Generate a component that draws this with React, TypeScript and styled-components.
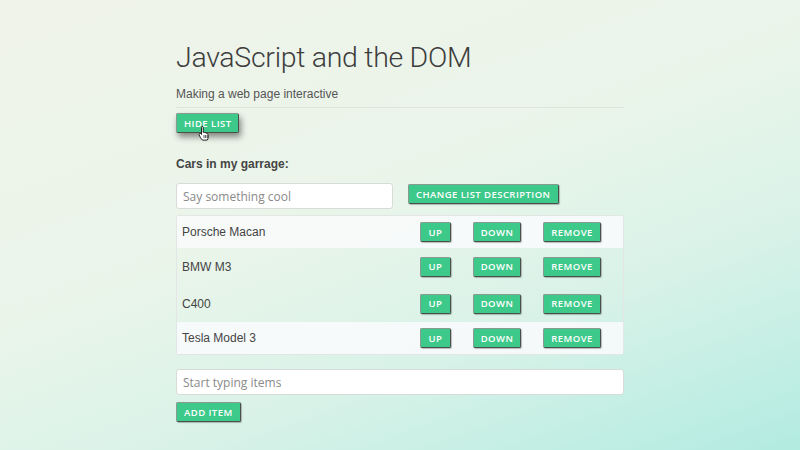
import React from "react";
import styled, { createGlobalStyle } from "styled-components";

const Global = createGlobalStyle`
  html, body { margin: 0; padding: 0; }
  body {
    width: 800px;
    height: 450px;
    overflow: hidden;
    background: linear-gradient(160deg, #f0f3e9 0%, #eaf5ea 45%, #d8f2e8 70%, #b2ebe1 100%);
    font-family: "Liberation Sans", Arial, sans-serif;
    color: #444;
  }
`;

const Page = styled.div`
  width: 448px;
  margin: 0 auto;
  padding-top: 40px;
  display: flex;
  flex-direction: column;
`;

const Title = styled.h1`
  margin: 0;
  font-family: Roboto, "Liberation Sans", sans-serif;
  font-weight: 300;
  font-size: 28.5px;
  line-height: 36px;
  color: #3d3d3d;
  letter-spacing: -0.3px;
`;

const Subtitle = styled.p`
  margin: 10px 0 0;
  font-size: 12px;
  line-height: 16px;
  color: #555;
  padding-bottom: 5px;
  border-bottom: 1px solid #e0e5dc;
`;

const Button = styled.button<{ $hover?: boolean }>`
  align-self: flex-start;
  height: 20px;
  padding: 0 7px;
  background: #3dc98a;
  color: #fff;
  border: 1px solid #8a9a92;
  border-right-color: #4a4f4c;
  border-bottom-color: #4a4f4c;
  border-radius: 2px;
  font-family: "Open Sans", "Liberation Sans", sans-serif;
  font-weight: 600;
  font-size: 9.5px;
  letter-spacing: 0.45px;
  text-transform: uppercase;
  cursor: pointer;
  box-shadow: ${(p) => (p.$hover ? "2px 4px 6px rgba(0,0,0,0.45)" : "1px 1px 1px rgba(0,0,0,0.25)")};
`;

const HideWrap = styled.div`
  position: relative;
  margin-top: 5px;
  align-self: flex-start;
  display: flex;
`;

const Cursor = styled.svg`
  position: absolute;
  left: 22px;
  top: 12px;
`;

const Label = styled.p`
  margin: 23px 0 0;
  font-weight: 700;
  font-size: 12px;
  line-height: 16px;
  color: #444;
`;

const DescRow = styled.div`
  display: flex;
  align-items: flex-start;
  gap: 15px;
  margin-top: 11px;
`;

const Input = styled.input<{ $width?: string }>`
  box-sizing: border-box;
  width: ${(p) => p.$width ?? "100%"};
  height: 26px;
  padding: 0 6px;
  border: 1px solid #d8dcd8;
  border-radius: 3px;
  background: #fff;
  font-family: "Open Sans", "Liberation Sans", sans-serif;
  font-size: 12px;
  color: #333;
  &::placeholder { color: #8a8a8a; }
`;

const DescButton = styled(Button)`
  margin-top: 1px;
`;

const List = styled.ul`
  margin: 6px 0 0;
  padding: 0;
  list-style: none;
  border: 1px solid #e2e6e4;
  border-radius: 3px;
`;

const Item = styled.li<{ $light?: boolean }>`
  display: flex;
  align-items: center;
  height: ${(p) => (p.$light ? "32px" : "37px")};
  padding: 0 22px 0 5px;
  background: ${(p) => (p.$light ? "rgba(250,250,253,0.85)" : "transparent")};
  font-size: 12px;
  color: #444;
`;

const ItemName = styled.span`
  flex: 1;
`;

const Controls = styled.div`
  display: grid;
  grid-template-columns: 31px 48px 58px;
  column-gap: 22px;
  justify-items: start;
`;

const SmallButton = styled(Button)`
  padding: 0;
  width: 100%;
`;

const AddInput = styled(Input)`
  margin-top: 14px;
`;

const AddButton = styled(Button)`
  margin-top: 7px;
`;

const cars = ["Porsche Macan", "BMW M3", "C400", "Tesla Model 3"];

export default function App() {
  return (
    <>
      <Global />
      <Page>
        <Title>JavaScript and the DOM</Title>
        <Subtitle>Making a web page interactive</Subtitle>
        <HideWrap>
          <Button $hover>Hide list</Button>
          <Cursor width="14" height="16" viewBox="0 0 14 16">
            <path
              d="M4 1.2c.7 0 1.2.5 1.2 1.2v5l.2-.1c.6-.3 1.3 0 1.5.5.5-.3 1.2-.1 1.5.5.5-.2 1.1 0 1.3.5l.2.4c.2.4.3.8.3 1.3v1.6c0 1.3-.4 2.2-1 3H4.4c-.5-.6-1.3-1.6-2-2.6L1.3 10c-.4-.6-.2-1.2.3-1.5.4-.3 1-.2 1.3.2l.6.8V2.4c0-.7.5-1.2.5-1.2z"
              fill="#fff"
              stroke="#111"
              strokeWidth="0.9"
              strokeLinejoin="round"
            />
            <path d="M6 10v3M7.6 10v3M9.2 10v3" stroke="#111" strokeWidth="0.7" />
          </Cursor>
        </HideWrap>
        <Label>Cars in my garrage:</Label>
        <DescRow>
          <Input $width="217px" placeholder="Say something cool" />
          <DescButton>Change list description</DescButton>
        </DescRow>
        <List>
          {cars.map((c, i) => (
            <Item key={c} $light={i === 0 || i === cars.length - 1}>
              <ItemName>{c}</ItemName>
              <Controls>
                <SmallButton>Up</SmallButton>
                <SmallButton>Down</SmallButton>
                <SmallButton>Remove</SmallButton>
              </Controls>
            </Item>
          ))}
        </List>
        <AddInput placeholder="Start typing items" />
        <AddButton>Add item</AddButton>
      </Page>
    </>
  );
}
